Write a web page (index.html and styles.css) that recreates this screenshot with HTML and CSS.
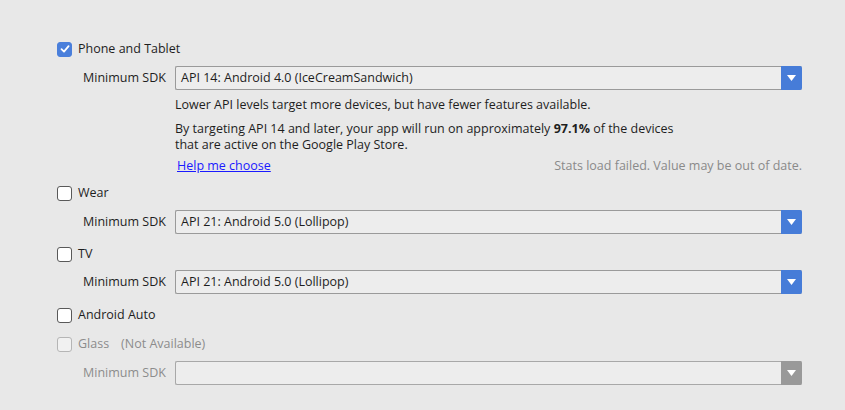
FILE: index.html
```html
<!DOCTYPE html>
<html>
<head>
<meta charset="utf-8">
<link rel="stylesheet" href="styles.css">
</head>
<body>
<div class="page">
  <div class="check-row first">
    <span class="cb checked"><svg width="10" height="10" viewBox="0 0 10 10"><path d="M1.5 5.2 L4 7.6 L8.6 2.2" fill="none" stroke="#fff" stroke-width="1.8" stroke-linecap="round" stroke-linejoin="round"/></svg></span>
    <span class="cb-label">Phone and Tablet</span>
  </div>
  <div class="sdk-row">
    <span class="sdk-label">Minimum SDK</span>
    <div class="combo"><span class="combo-text">API 14: Android 4.0 (IceCreamSandwich)</span><span class="arrow"><svg width="9" height="6" viewBox="0 0 9 6"><path d="M0 0 H9 L4.5 6 Z" fill="#fff"/></svg></span></div>
  </div>
  <div class="info">
    <p class="line l1">Lower API levels target more devices, but have fewer features available.</p>
    <p class="line l2">By targeting API 14 and later, your app will run on approximately <b>97.1%</b> of the devices<br>that are active on the Google Play Store.</p>
    <div class="help-row">
      <a class="help" href="#">Help me choose</a>
      <span class="stats">Stats load failed. Value may be out of date.</span>
    </div>
  </div>
  <div class="check-row wear">
    <span class="cb"></span>
    <span class="cb-label">Wear</span>
  </div>
  <div class="sdk-row">
    <span class="sdk-label">Minimum SDK</span>
    <div class="combo"><span class="combo-text">API 21: Android 5.0 (Lollipop)</span><span class="arrow"><svg width="9" height="6" viewBox="0 0 9 6"><path d="M0 0 H9 L4.5 6 Z" fill="#fff"/></svg></span></div>
  </div>
  <div class="check-row tv">
    <span class="cb"></span>
    <span class="cb-label">TV</span>
  </div>
  <div class="sdk-row tight">
    <span class="sdk-label">Minimum SDK</span>
    <div class="combo"><span class="combo-text">API 21: Android 5.0 (Lollipop)</span><span class="arrow"><svg width="9" height="6" viewBox="0 0 9 6"><path d="M0 0 H9 L4.5 6 Z" fill="#fff"/></svg></span></div>
  </div>
  <div class="check-row auto">
    <span class="cb"></span>
    <span class="cb-label">Android Auto</span>
  </div>
  <div class="check-row glass disabled">
    <span class="cb"></span>
    <span class="cb-label">Glass</span>
    <span class="na">(Not Available)</span>
  </div>
  <div class="sdk-row disabled">
    <span class="sdk-label">Minimum SDK</span>
    <div class="combo"><span class="combo-text"></span><span class="arrow"><svg width="9" height="6" viewBox="0 0 9 6"><path d="M0 0 H9 L4.5 6 Z" fill="#fff"/></svg></span></div>
  </div>
</div>
</body>
</html>
```
FILE: styles.css
```css
html, body {
  margin: 0;
  padding: 0;
  background: #e8e8e8;
}
body {
  width: 845px;
  height: 410px;
  overflow: hidden;
  font-family: "Open Sans", "Noto Sans", sans-serif;
  font-size: 12.5px;
  line-height: 16px;
  color: #1e1e1e;
}
.page {
  padding: 41px 0 0 57px;
  width: 745px;
}
.check-row {
  display: flex;
  align-items: center;
  height: 16px;
}
.cb {
  box-sizing: border-box;
  width: 15px;
  height: 15px;
  border: 1px solid #595959;
  border-radius: 3px;
  background: #fff;
  display: flex;
  align-items: center;
  justify-content: center;
  flex: none;
}
.cb.checked {
  background: #4a7fdb;
  border-color: #4a7fdb;
}
.cb-label {
  margin-left: 6px;
}
.disabled .cb {
  border-color: #b5b5b5;
  background: #f1f1f1;
}
.disabled .cb-label, .disabled .na, .disabled .sdk-label {
  color: #8c8c8c;
}
.na {
  margin-left: 12px;
}
.sdk-row {
  display: flex;
  align-items: center;
  margin-top: 9px;
  padding-left: 26px;
}
.sdk-row.tight {
  margin-top: 8px;
}
.sdk-label {
  width: 92px;
  flex: none;
}
.combo {
  box-sizing: border-box;
  width: 627px;
  height: 24px;
  border: 1px solid #9a9a9a;
  border-right: none;
  border-radius: 2px;
  background: #ededed;
  display: flex;
  align-items: center;
  justify-content: space-between;
}
.combo-text {
  padding-left: 5px;
}
.arrow {
  width: 21px;
  height: 24px;
  margin: -1px 0;
  background: #467cd8;
  border-radius: 0 2px 2px 0;
  display: flex;
  align-items: center;
  justify-content: center;
}
.disabled .arrow {
  background: #999999;
}
.disabled .combo {
  border-color: #a8a8a8;
}
.info {
  padding-left: 118px;
  margin-top: 7px;
}
.line {
  margin: 0;
}
.l2 {
  margin-top: 8px;
}
.help-row {
  display: flex;
  justify-content: space-between;
  align-items: center;
  margin-top: 5px;
  width: 627px;
  padding-left: 2px;
  box-sizing: border-box;
}
.help {
  color: #1a1aff;
  text-decoration: underline;
}
.stats {
  color: #8a8a8a;
}
.check-row.wear { margin-top: 11px; }
.check-row.tv { margin-top: 12px; }
.check-row.auto { margin-top: 13px; }
.check-row.glass { margin-top: 13px; }
```
